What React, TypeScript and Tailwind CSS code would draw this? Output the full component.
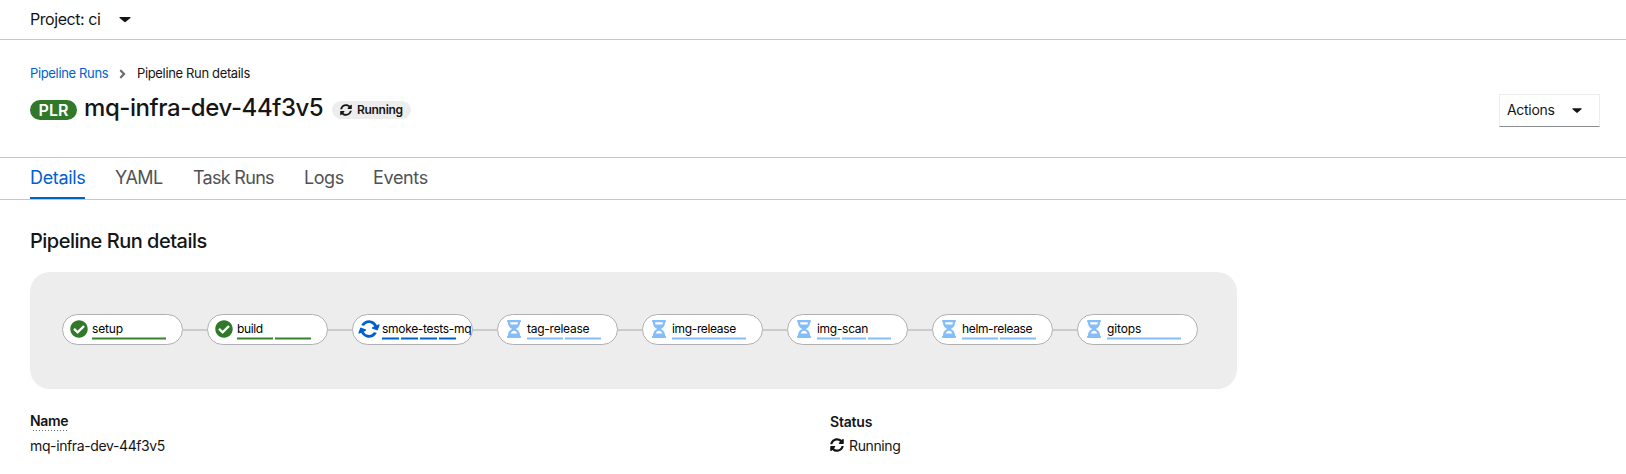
import React from "react";
import { FaSyncAlt, FaHourglassHalf, FaCheckCircle, FaCaretDown, FaAngleRight } from "react-icons/fa";

type Status = "done" | "running" | "pending";

const tasks: { name: string; status: Status; steps: number; spacing: string }[] = [
  { name: "setup", status: "done", steps: 1, spacing: "tracking-[-0.15px]" },
  { name: "build", status: "done", steps: 2, spacing: "tracking-[-0.35px]" },
  { name: "smoke-tests-mq", status: "running", steps: 4, spacing: "tracking-[-0.3px]" },
  { name: "tag-release", status: "pending", steps: 2, spacing: "tracking-[-0.25px]" },
  { name: "img-release", status: "pending", steps: 1, spacing: "tracking-[-0.35px]" },
  { name: "img-scan", status: "pending", steps: 3, spacing: "tracking-[-0.3px]" },
  { name: "helm-release", status: "pending", steps: 2, spacing: "tracking-[-0.35px]" },
  { name: "gitops", status: "pending", steps: 1, spacing: "tracking-[-0.1px]" },
];

const barColor: Record<Status, string> = {
  done: "border-[#38812f]/50 bg-[#38812f]",
  running: "border-[#0060cf]/50 bg-[#0060cf]",
  pending: "border-[#84bdfa]/50 bg-[#84bdfa]",
};

function TaskIcon({ status }: { status: Status }) {
  if (status === "done") return <FaCheckCircle className="size-[18px] text-[#30782a]" />;
  if (status === "running") return <FaSyncAlt className="size-[18px] shrink-0 rotate-[20deg] text-[#0060cf]" />;
  return <FaHourglassHalf preserveAspectRatio="none" className="h-[18px] w-[14px] text-[#84bdfa]" />;
}

function TaskNode({ task }: { task: (typeof tasks)[number] }) {
  return (
    <div className="flex h-[31px] w-[121px] shrink-0 rounded-full border border-[#b0b0b4] bg-white">
      <div className="flex h-[28px] w-[29px] shrink-0 items-center justify-center pl-[3px]">
        <TaskIcon status={task.status} />
      </div>
      <div className="min-w-0 pt-[5px]">
        <div className={`h-[17px] text-[12px] leading-[18px] whitespace-nowrap text-black ${task.spacing}`}>{task.name}</div>
        <div className="flex h-[3px] w-[74px] gap-[2px]">
          {Array.from({ length: task.steps }, (_, i) => (
            <div key={i} className={`h-full flex-1 border-y bg-clip-padding ${barColor[task.status]}`} />
          ))}
        </div>
      </div>
    </div>
  );
}

export default function App() {
  return (
    <div className="h-[474px] w-full overflow-hidden bg-white font-['Inter',sans-serif] whitespace-nowrap text-[#151515]">
      <div className="flex h-10 items-center border-b border-[#c7c7c7] pl-[30px] text-[16px] tracking-[-0.45px]">
        <span className="-mt-[2px] w-[89px]">Project: ci</span>
        <FaCaretDown className="-mt-px h-4 w-[12px]" preserveAspectRatio="none" />
      </div>

      <header className="h-[118px] border-b border-[#c7c7c7] pr-[26px] pl-[30px]">
        <nav className="flex h-[66px] items-center pt-[2px] text-[13px] tracking-[-0.35px]">
          <a className="w-[86px] text-[#0060cf]">Pipeline Runs</a>
          <FaAngleRight className="mr-[8px] h-[14px] w-[13px] text-[#6a6e73]" />
          <span>Pipeline Run details</span>
        </nav>
        <div className="-mt-[12px] flex justify-between">
          <div className="flex">
            <span className="mt-[6px] flex h-5 w-[47px] items-center justify-center rounded-full bg-[#30782a] text-[16px] font-semibold text-white">PLR</span>
            <h1 className="ml-[7px] w-[248px] text-[24px] leading-[28px] font-medium tracking-[-0.43px]">mq-infra-dev-44f3v5</h1>
            <span className="mt-[7px] flex h-[18px] w-[79px] items-center rounded-full bg-[#ededed] pl-2 text-[12px] font-semibold tracking-[-0.3px]">
              <FaSyncAlt className="mr-[5px] size-3" />
              Running
            </span>
          </div>
          <button className="flex h-[33px] w-[101px] items-center border border-[#ededed] border-b-[#8a8d90] pb-[2px] pl-[7px] text-[14px] tracking-[-0.3px]">
            <span className="w-[65px] text-left">Actions</span>
            <FaCaretDown className="h-[14px] w-[10px]" preserveAspectRatio="none" />
          </button>
        </div>
      </header>

      <nav className="flex h-[42px] border-b border-[#c7c7c7] pl-[30px] text-[18px] leading-[40px] text-[#4f5255]">
        <a className="mr-[30px] w-[55px] border-b-2 border-[#0060cf] tracking-[-0.35px] text-[#0060cf]">Details</a>
        <a className="w-[78px] tracking-[-0.5px]">YAML</a>
        <a className="w-[111px] tracking-[-0.7px]">Task Runs</a>
        <a className="w-[69px] tracking-[-0.45px]">Logs</a>
        <a className="tracking-[-0.35px]">Events</a>
      </nav>

      <main className="pl-[30px]">
        <h2 className="h-[72px] pt-[27px] text-[20px] leading-[28px] font-medium tracking-[-0.5px]">Pipeline Run details</h2>
        <div className="flex h-[117px] w-[1207px] rounded-[20px] bg-[#ededed] pt-[42px] pl-8">
          {tasks.map((task, i) => (
            <React.Fragment key={task.name}>
              {i > 0 && <div className="mt-[15px] h-[2px] w-6 shrink-0 bg-[#cbcbcc]" />}
              <TaskNode task={task} />
            </React.Fragment>
          ))}
        </div>
        <dl className="flex pt-[22px] text-[14px] tracking-[-0.38px]">
          <div className="w-[800px]">
            <dt className="h-[24px] leading-[20px] font-semibold">
              <span className="flex h-[20px] w-[38px] flex-col">
                Name
                <svg className="-mt-px ml-[3px] h-px w-[35px] shrink-0" shapeRendering="crispEdges">
                  <path d="M0 .5H35" stroke="#6a6e73" strokeDasharray="1 2" />
                </svg>
              </span>
            </dt>
            <dd className="leading-[22px]">mq-infra-dev-44f3v5</dd>
          </div>
          <div>
            <dt className="h-[24px] leading-[22px] font-semibold tracking-[-0.2px]">Status</dt>
            <dd className="flex items-center leading-[21px]">
              <FaSyncAlt className="mr-[5px] -mt-px size-[14px]" />
              Running
            </dd>
          </div>
        </dl>
      </main>
    </div>
  );
}
